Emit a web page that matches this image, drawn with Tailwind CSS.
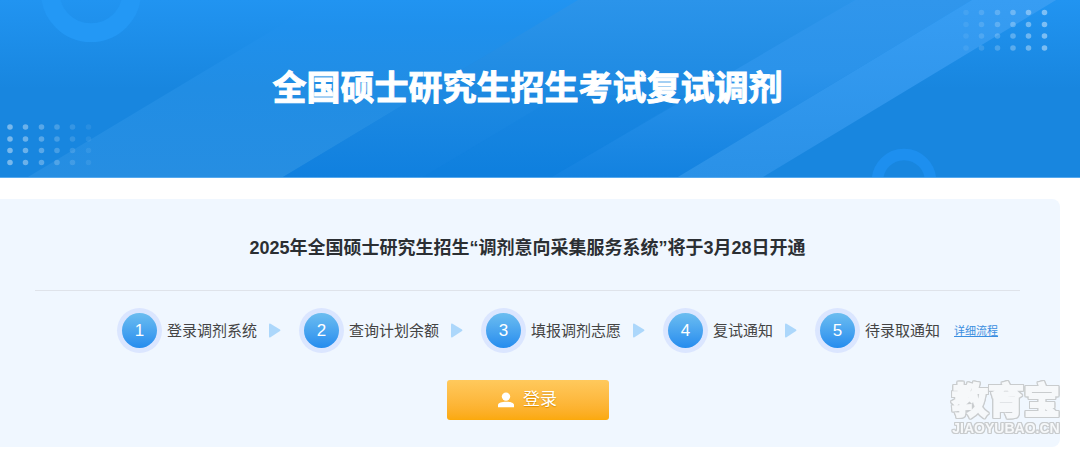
<!DOCTYPE html>
<html lang="zh-CN">
<head>
<meta charset="utf-8">
<meta name="viewport" content="width=device-width, initial-scale=1">
<title>全国硕士研究生招生考试复试调剂</title>
<script src="https://cdn.jsdelivr.net/npm/@tailwindcss/browser@4"></script>
</head>
<body class="relative bg-white font-['Liberation_Sans','Noto_Sans_CJK_SC',sans-serif]">
<header class="relative flex h-[178px] items-center justify-center overflow-hidden border-b border-[#56a9ee] bg-[#1886df] pr-[25px] pb-[2px]">
  <svg class="absolute inset-0 h-full w-full" viewBox="0 0 1080 177" preserveAspectRatio="xMidYMid slice" aria-hidden="true">
    <defs>
      <linearGradient id="base" x1="0" y1="0" x2="0" y2="1"><stop offset="0" stop-color="#2194f1"/><stop offset=".5" stop-color="#1886df"/><stop offset="1" stop-color="#1886df"/></linearGradient>
      <linearGradient id="a" gradientUnits="userSpaceOnUse" x1="0" y1="0" x2="0" y2="177"><stop offset="0" stop-color="#2194f1"/><stop offset=".15" stop-color="#1f90ec"/><stop offset=".5" stop-color="#218de4"/><stop offset="1" stop-color="#268ee2"/></linearGradient>
      <linearGradient id="b" gradientUnits="userSpaceOnUse" x1="0" y1="0" x2="0" y2="177"><stop offset="0" stop-color="#2b94ea"/><stop offset=".5" stop-color="#1e8ae2"/><stop offset="1" stop-color="#1080df"/></linearGradient>
      <linearGradient id="c" gradientUnits="userSpaceOnUse" x1="0" y1="0" x2="0" y2="177"><stop offset="0" stop-color="#3096ec"/><stop offset=".4" stop-color="#2b93ea"/><stop offset="1" stop-color="#1382e0"/></linearGradient>
      <linearGradient id="d" gradientUnits="userSpaceOnUse" x1="0" y1="0" x2="0" y2="177"><stop offset="0" stop-color="#379df3"/><stop offset="1" stop-color="#2a91e7"/></linearGradient>
    </defs>
    <path fill="url(#base)" d="M0 0h1080v177H0z"/>
    <path fill="url(#a)" d="M28 177 323 0H578L283 177z"/>
    <path fill="url(#b)" d="M283 177 578 0H855L560 177z"/>
    <path fill="#0878dc" fill-opacity=".12" d="M423 177 560 95 690 95 552 177z"/>
    <path fill="url(#c)" d="M552 177 855 0H972L678 177z"/>
    <path fill="url(#d)" d="M678 177 972 0H1056L763 177z"/>
    <circle cx="91" cy="-8" r="40.7" fill="none" stroke="#2398f5" stroke-width="18.7"/>
    <circle cx="904" cy="181" r="26.5" fill="none" stroke="#1d8fef" stroke-width="11.5"/>
    <g fill="none" stroke="#fff" stroke-width="5.6" stroke-linecap="round">
      <path opacity=".42" d="M10 127h0M10 139h0M10 150.500h0M10 162.500h0M1044.500 12.500h0M1044.500 24.500h0M1044.500 36h0M1044.500 48h0"/>
      <path opacity=".36" d="M25.500 127h0M25.500 139h0M25.500 150.500h0M25.500 162.500h0M1028.500 12.500h0M1028.500 24.500h0M1028.500 36h0M1028.500 48h0"/>
      <path opacity=".28" d="M41.500 127h0M41.500 139h0M41.500 150.500h0M41.500 162.500h0M1013 12.500h0M1013 24.500h0M1013 36h0M1013 48h0"/>
      <path opacity=".2" d="M57 127h0M57 139h0M57 150.500h0M57 162.500h0M997.500 12.500h0M997.500 24.500h0M997.500 36h0M997.500 48h0"/>
      <path opacity=".13" d="M72.500 127h0M72.500 139h0M72.500 150.500h0M72.500 162.500h0M981.500 12.500h0M981.500 24.500h0M981.500 36h0M981.500 48h0"/>
      <path opacity=".07" d="M88.500 127h0M88.500 139h0M88.500 150.500h0M88.500 162.500h0M966 12.500h0M966 24.500h0M966 36h0M966 48h0"/>
    </g>
  </svg>
  <h1 class="relative text-[34px] leading-[40px] font-bold text-white [-webkit-text-stroke:1px_white]">全国硕士研究生招生考试复试调剂</h1>
</header>

<main class="mt-[21px] mr-[20px] rounded-r-lg bg-[#f0f7ff] pt-[36px] pr-[40px] pb-[27px] pl-[35px]">
  <h2 class="text-center text-[18px] leading-[26px] font-bold text-[#2b2f33]">2025年全国硕士研究生招生“调剂意向采集服务系统”将于3月28日开通</h2>
  <hr class="mt-[29px] border-[#dfe3ea]">
  <div class="mt-[17px] flex items-center justify-center pl-[60px] whitespace-nowrap">
    <ol class="flex items-center text-[15px] leading-[22px] text-[#444]">
      <li class="flex items-center"><span class="mr-[5px] flex size-[45px] items-center justify-center rounded-full bg-[#dbe6ff] p-[5px]"><span class="flex size-full items-center justify-center rounded-full bg-linear-to-b from-[#6bbdf0] to-[#248cee] text-[17px] text-white">1</span></span>登录调剂系统<svg class="mr-[18px] ml-[12px] h-[15px] w-[12px]" viewBox="0 0 12 15" aria-hidden="true"><path fill="#acd7fb" d="M0 1.500Q0 0 1.500.700L11 6.500Q12 7.300 11 8.100L1.500 14.200Q0 15 0 13.500z"/></svg></li>
      <li class="flex items-center"><span class="mr-[5px] flex size-[45px] items-center justify-center rounded-full bg-[#dbe6ff] p-[5px]"><span class="flex size-full items-center justify-center rounded-full bg-linear-to-b from-[#6bbdf0] to-[#248cee] text-[17px] text-white">2</span></span>查询计划余额<svg class="mr-[18px] ml-[12px] h-[15px] w-[12px]" viewBox="0 0 12 15" aria-hidden="true"><path fill="#acd7fb" d="M0 1.500Q0 0 1.500.700L11 6.500Q12 7.300 11 8.100L1.500 14.200Q0 15 0 13.500z"/></svg></li>
      <li class="flex items-center"><span class="mr-[5px] flex size-[45px] items-center justify-center rounded-full bg-[#dbe6ff] p-[5px]"><span class="flex size-full items-center justify-center rounded-full bg-linear-to-b from-[#6bbdf0] to-[#248cee] text-[17px] text-white">3</span></span>填报调剂志愿<svg class="mr-[18px] ml-[12px] h-[15px] w-[12px]" viewBox="0 0 12 15" aria-hidden="true"><path fill="#acd7fb" d="M0 1.500Q0 0 1.500.700L11 6.500Q12 7.300 11 8.100L1.500 14.200Q0 15 0 13.500z"/></svg></li>
      <li class="flex items-center"><span class="mr-[5px] flex size-[45px] items-center justify-center rounded-full bg-[#dbe6ff] p-[5px]"><span class="flex size-full items-center justify-center rounded-full bg-linear-to-b from-[#6bbdf0] to-[#248cee] text-[17px] text-white">4</span></span>复试通知<svg class="mr-[18px] ml-[12px] h-[15px] w-[12px]" viewBox="0 0 12 15" aria-hidden="true"><path fill="#acd7fb" d="M0 1.500Q0 0 1.500.700L11 6.500Q12 7.300 11 8.100L1.500 14.200Q0 15 0 13.500z"/></svg></li>
      <li class="flex items-center"><span class="mr-[5px] flex size-[45px] items-center justify-center rounded-full bg-[#dbe6ff] p-[5px]"><span class="flex size-full items-center justify-center rounded-full bg-linear-to-b from-[#6bbdf0] to-[#248cee] text-[17px] text-white">5</span></span>待录取通知</li>
    </ol>
    <a href="#" class="ml-[14px] text-[11px] leading-[16px] text-[#3a8ee0] underline">详细流程</a>
  </div>
  <button type="button" class="mx-auto mt-[27px] flex h-[40px] w-[162px] items-center justify-center gap-[9px] rounded-[3px] bg-linear-to-b from-[#ffc95c] to-[#fba90a] text-[17px] leading-[24px] text-white [text-shadow:0_1px_1px_#d98c00]">
    <svg class="h-[16px] w-[16px]" viewBox="0 0 16 16" fill="currentColor" aria-hidden="true"><circle cx="8" cy="4.600" r="4.200"/><path d="M0 15.200V13C0 10.800 4 9.700 8 9.700S16 10.800 16 13V15.200z"/></svg>
    登录
  </button>
</main>

<!-- Site watermark over the corner of the card -->
<div class="pointer-events-none absolute top-[384px] right-[20px] flex flex-col items-center font-bold whitespace-nowrap text-[#f6f8fa] [filter:drop-shadow(1px_0_0_#c9ccce)_drop-shadow(-1px_0_0_#c9ccce)_drop-shadow(0_1px_0_#c9ccce)_drop-shadow(0_-1px_0_#c9ccce)]">
  <span class="text-[36px] leading-[36px] [-webkit-text-stroke:2px_#f6f8fa]">教育宝</span>
  <span class="text-[14px] leading-[16px]">JIAOYUBAO.CN</span>
</div>
</body>
</html>
